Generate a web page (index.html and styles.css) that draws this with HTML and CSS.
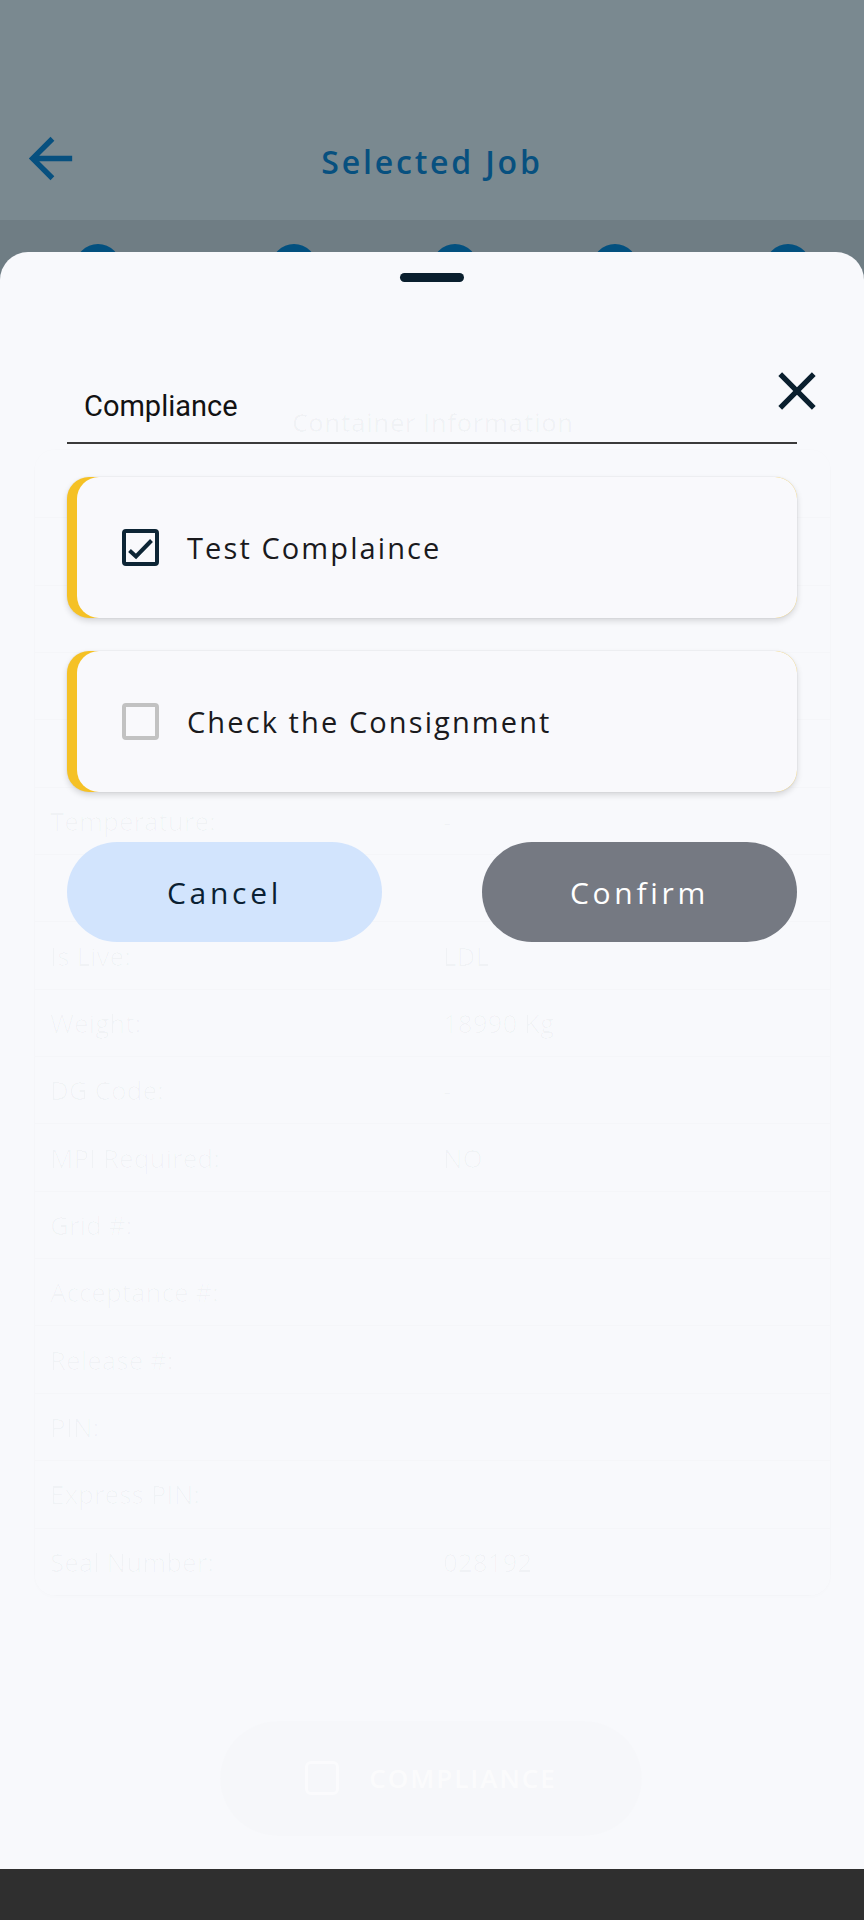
FILE: index.html
```html
<!DOCTYPE html>
<html lang="en">
<head>
<meta charset="utf-8">
<title>Selected Job</title>
<link rel="stylesheet" href="styles.css">
</head>
<body>
<div class="screen">
  <div class="page">
    <header class="appbar-wrap">
      <div class="appbar">
        <svg class="back" viewBox="0 0 24 24"><path d="M20 11H7.83l5.59-5.59L12 4l-8 8 8 8 1.41-1.41L7.83 13H20v-2z"/></svg>
        <h1 class="title">Selected Job</h1>
        <span></span>
      </div>
    </header>
    <div class="steps">
      <span class="dot"></span><span class="dot"></span><span class="dot"></span><span class="dot"></span><span class="dot"></span>
    </div>
  </div>

  <div class="sheet">
    <div class="ghost" aria-hidden="true">
      <div class="ghost-title">Container Information</div>
      <div class="ghost-card">
        <div class="ghost-row"></div>
        <div class="ghost-row"></div>
        <div class="ghost-row"></div>
        <div class="ghost-row"></div>
        <div class="ghost-row"></div>
        <div class="ghost-row"><span>Temperature:</span><span>-</span></div>
        <div class="ghost-row"></div>
        <div class="ghost-row"><span>Is Live:</span><span>LDL</span></div>
        <div class="ghost-row"><span>Weight:</span><span>18990 Kg</span></div>
        <div class="ghost-row"><span>DG Code:</span><span>-</span></div>
        <div class="ghost-row"><span>MPI Required:</span><span>NO</span></div>
        <div class="ghost-row"><span>Grid #:</span><span></span></div>
        <div class="ghost-row"><span>Acceptance #:</span><span></span></div>
        <div class="ghost-row"><span>Release #:</span><span></span></div>
        <div class="ghost-row"><span>PIN:</span><span></span></div>
        <div class="ghost-row"><span>Express PIN:</span><span></span></div>
        <div class="ghost-row"><span>Seal Number:</span><span>028192</span></div>
      </div>
      <div class="ghost-btn"><span class="ghost-icon"></span>COMPLIANCE</div>
    </div>

    <div class="handle"></div>
    <div class="field">Compliance</div>
    <button class="close" aria-label="Close">
      <svg viewBox="0 0 24 24"><path d="M19 6.41L17.59 5 12 10.59 6.41 5 5 6.41 10.59 12 5 17.59 6.41 19 12 13.41 17.59 19 19 17.59 13.41 12z"/></svg>
    </button>

    <div class="card">
      <div class="card-inner">
        <span class="cb on"><svg viewBox="0 0 29 29"><polyline points="3.5,17.5 10,23.5 25.5,7.5"/></svg></span>
        <span class="label">Test Complaince</span>
      </div>
    </div>
    <div class="card">
      <div class="card-inner">
        <span class="cb"></span>
        <span class="label">Check the Consignment</span>
      </div>
    </div>

    <div class="actions">
      <button class="btn cancel">Cancel</button>
      <button class="btn confirm">Confirm</button>
    </div>
  </div>

  <div class="navbar"></div>
</div>
</body>
</html>
```
FILE: styles.css
```css
html, body {
  margin: 0;
  padding: 0;
}
body {
  width: 864px;
  height: 1920px;
  overflow: hidden;
  background: #f8f9fc;
  font-family: "Open Sans", "Noto Sans", sans-serif;
}
.screen {
  position: relative;
  height: 1920px;
  display: flex;
  flex-direction: column;
}
.page {
  flex: 1;
  display: flex;
  flex-direction: column;
  overflow: hidden;
  background: #6f7d84;
}
.appbar-wrap {
  height: 220px;
  background: #7a8990;
  display: flex;
  flex-direction: column;
  justify-content: flex-end;
}
.appbar {
  height: 120px;
  display: grid;
  grid-template-columns: 1fr auto 1fr;
  align-items: center;
}
.back {
  width: 65px;
  height: 65px;
  fill: #07507f;
  margin-left: 18px;
  margin-top: -3px;
  justify-self: start;
}
.title {
  margin: 0;
  padding-top: 2px;
  font-size: 32px;
  font-weight: 600;
  letter-spacing: 2.8px;
  color: #07507f;
}
.steps {
  display: grid;
  grid-template-columns: 196px 196px 126px 194px 152px;
  justify-items: center;
  align-items: start;
  padding-top: 24px;
  height: 120px;
}
.dot {
  width: 46px;
  height: 46px;
  border-radius: 50%;
  background: #03507f;
}

.sheet {
  position: absolute;
  top: 252px;
  left: 0;
  right: 0;
  bottom: 51px;
  box-sizing: border-box;
  padding: 0 67px;
  background: #f8f9fc;
  border-radius: 28px 28px 0 0;
  display: flex;
  flex-direction: column;
}
.sheet > :not(.ghost) {
  position: relative;
  z-index: 1;
}
.navbar {
  flex: none;
  height: 51px;
  background: #2f2f2f;
}

.handle {
  width: 64px;
  height: 9px;
  border-radius: 5px;
  background: #0a1f2e;
  margin: 21px auto 0;
}
.field {
  margin-top: 107px;
  padding: 0 0 19px 17px;
  font-family: Roboto, "Liberation Sans", sans-serif;
  font-size: 29px;
  line-height: 34px;
  color: #121212;
  border-bottom: 2px solid #3a3a3a;
}
.sheet > .close {
  position: absolute;
  top: 107px;
  right: 35px;
  width: 64px;
  height: 64px;
  padding: 0;
  border: 0;
  background: none;
}
.close svg {
  display: block;
  width: 64px;
  height: 64px;
  fill: #0a1f2e;
}

.card {
  margin-top: 33px;
  height: 141px;
  border-radius: 22px;
  background: #f5c125;
  overflow: hidden;
  display: flex;
  box-shadow: 0 0 0 1px rgba(0, 0, 0, 0.025), 0 3px 6px rgba(0, 0, 0, 0.14);
}
.card-inner {
  flex: 1;
  margin-left: 10px;
  background: #f9f9fc;
  border-radius: 22px 0 0 22px;
  display: flex;
  align-items: center;
  gap: 28px;
  padding-left: 45px;
}
.cb {
  flex: none;
  width: 37px;
  height: 37px;
  box-sizing: border-box;
  border: 4px solid #c2c2c2;
  border-radius: 4px;
}
.cb.on {
  border-color: #0d2535;
}
.cb svg {
  display: block;
  width: 29px;
  height: 29px;
  fill: none;
  stroke: #0d2535;
  stroke-width: 4;
}
.label {
  font-size: 29px;
  font-weight: 500;
  letter-spacing: 2.1px;
  color: #1a1a1d;
}

.actions {
  margin-top: 50px;
  display: flex;
  justify-content: space-between;
}
.btn {
  width: 315px;
  height: 100px;
  border: 0;
  border-radius: 50px;
  font-family: inherit;
  font-size: 30px;
  font-weight: 500;
  letter-spacing: 3.7px;
}
.cancel {
  background: #d2e4fd;
  color: #0a1f33;
}
.confirm {
  background: #757982;
  color: #ffffff;
}

/* faded page content visible through the sheet */
.ghost {
  position: absolute;
  inset: 0;
  pointer-events: none;
  display: flex;
  flex-direction: column;
  padding: 0 34px 0 35px;
  color: rgba(20, 30, 50, 0.028);
  font-size: 26px;
  font-weight: 500;
}
.ghost-title {
  margin-top: 152px;
  height: 36px;
  line-height: 36px;
  text-align: center;
  font-weight: 600;
}
.ghost-card {
  margin-top: 10px;
  border-radius: 20px;
  box-shadow: 0 0 0 1px rgba(0, 0, 0, 0.008), 0 2px 6px rgba(0, 0, 0, 0.01);
}
.ghost-row {
  height: 67.35px;
  box-sizing: border-box;
  display: grid;
  grid-template-columns: 393px 1fr;
  align-items: center;
  padding-left: 15px;
  border-top: 1px solid rgba(0, 0, 0, 0.012);
}
.ghost-row:first-child {
  border-top: 0;
}
.ghost-btn {
  align-self: flex-start;
  margin: 126px 0 0 185px;
  width: 422px;
  height: 115px;
  border-radius: 58px;
  background: rgba(0, 0, 0, 0.006);
  color: rgba(255, 255, 255, 0.6);
  display: flex;
  align-items: center;
  justify-content: center;
  gap: 30px;
  font-weight: 600;
  letter-spacing: 2px;
}
.ghost-icon {
  width: 28px;
  height: 28px;
  border-radius: 6px;
  border: 3px solid rgba(255, 255, 255, 0.5);
}
```
